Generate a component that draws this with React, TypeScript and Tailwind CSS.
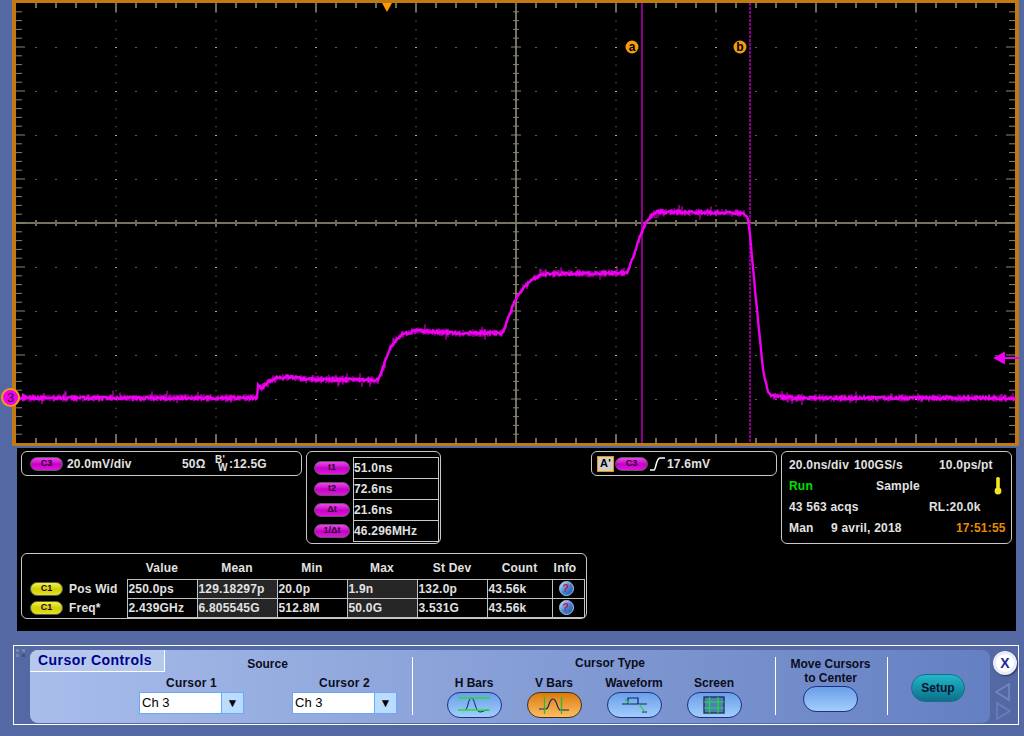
import type { ReactNode } from "react";

const range = (from: number, to: number, step: number) => {
  const out: number[] = [];
  for (let v = from; v <= to + 0.01; v += step) out.push(v);
  return out;
};

const TRACE: [number, number][] = [
  [17, 398], [257, 398], [258, 386], [262, 388], [268, 382], [275, 378], [290, 377],
  [310, 379.5], [378, 380], [381, 373], [390, 348], [395, 341], [403, 334], [418, 330.5],
  [453, 333], [502, 333], [505, 327], [508, 318], [515, 300], [523, 288], [533, 279],
  [543, 274], [627, 273], [630, 266], [640, 237], [645, 224], [650, 217], [657, 212],
  [743, 213], [748, 218], [750, 235], [756, 300], [763, 370], [768, 392], [772, 396],
  [790, 398], [1015, 398],
];

// small seeded generator so the noise is the same on every render
let seed = 20180409;
const rnd = () => {
  seed = (seed + 0x6d2b79f5) | 0;
  let t = Math.imul(seed ^ (seed >>> 15), 1 | seed);
  t = (t + Math.imul(t ^ (t >>> 7), 61 | t)) ^ t;
  return ((t ^ (t >>> 14)) >>> 0) / 4294967296;
};

const yAt = (x: number) => {
  for (let i = 1; i < TRACE.length; i++) {
    const [x0, y0] = TRACE[i - 1];
    const [x1, y1] = TRACE[i];
    if (x <= x1) return y0 + ((y1 - y0) * (x - x0)) / (x1 - x0);
  }
  return 398;
};

let tracePath = "";
let noisePath = "";
for (let x = 17; x <= 1015; x++) {
  const y = yAt(x);
  const flat = Math.abs(yAt(x + 1) - y) < 0.6;
  const j = Math.round((rnd() - 0.5) * (flat ? 3 : 1.6));
  tracePath += `${x === 17 ? "M" : "L"}${x} ${y + j} `;
  if (flat ? rnd() < 0.55 : x < 745 && rnd() < 0.5) {
    const up = 1.5 + rnd() * (rnd() < 0.12 ? 6 : 2.5);
    const down = 1.5 + rnd() * (rnd() < 0.12 ? 6 : 2.5);
    noisePath += `M${x} ${y - up} V${y + down} `;
  }
}

function Scope() {
  return (
    <svg viewBox="16 3 999 440" className="block w-[999px] h-[440px] overflow-visible">
      <g fill="#55524a">
        {range(116, 916, 100).map((x) =>
          range(11.8, 435, 8.8).map((y) => <rect key={`${x}-${y}`} x={x - 1} y={y} width={2} height={1} fill="#4a4840" />)
        )}
        {range(47, 399, 44).map((y) =>
          range(36, 996, 20).map((x) => (
            <rect key={`${x}-${y}`} x={x - 1} y={y} width={2} height={1} fill={(x - 16) % 100 === 0 ? "#b0ac98" : "#5c5a50"} />
          ))
        )}
      </g>
      <g stroke="#6f6b5c" strokeWidth={2}>
        <path d="M516 3V443M16 223H1015" stroke="#77725f" strokeWidth={2} />
        {range(36, 996, 20).map((x) => {
          const major = (x - 16) % 100 === 0;
          const len = major ? 9 : 5;
          return (
            <path key={x} d={`M${x} 3V${3 + len}M${x} 443V${443 - len}M${x} ${223 - (major ? 4 : 3)}V${223 + (major ? 4 : 3)}`} />
          );
        })}
        {range(11.8, 435, 8.8).map((y, i) => {
          const major = (i + 1) % 5 === 0;
          const len = major ? 9 : 6;
          const half = major ? 5 : 3;
          return (
            <path key={y} stroke="#8b8672" strokeWidth={1} d={`M16 ${y}H${16 + len}M1015 ${y}H${1015 - len}M${516 - half} ${y}H${516 + half}`} />
          );
        })}
      </g>
      <path d="M642 3V443" stroke="#8a008a" strokeWidth={2} />
      <path d="M750 3V443" stroke="#8a008a" strokeWidth={2} strokeDasharray="3 1" />
      <path d={tracePath} fill="none" stroke="#f000f0" strokeWidth={2.4} />
      <path d={noisePath} fill="none" stroke="#f000f0" strokeWidth={1} />
      <path d="M22 393L29 397L22 401Z" fill="#f000f0" />
      <path d="M382 3H392L387 12Z" fill="#ff9a00" />
      <path d="M1004 353V363L995 358ZM1003 358H1019" fill="#f000f0" stroke="#f000f0" strokeWidth={1.8} />
      <circle cx={632} cy={47} r={6.5} fill="#f59b0c" />
      <circle cx={740} cy={47} r={6.5} fill="#f59b0c" />
      <text x={632} y={51} textAnchor="middle" fontSize={12} fontWeight={700} fill="#000">a</text>
      <text x={740} y={51} textAnchor="middle" fontSize={12} fontWeight={700} fill="#000">b</text>
    </svg>
  );
}

function Pill({ label, yellow, wide }: { label: string; yellow?: boolean; wide?: boolean }) {
  return (
    <span
      className={`flex h-[14px] shrink-0 items-center justify-center rounded-full border border-[#5a5a5a] text-[9px] font-bold leading-none tracking-normal text-[#2a002a] bg-gradient-to-b ${
        wide ? "w-[36px]" : "w-[33px]"
      } ${yellow ? "from-[#f4f43a] via-[#cfcf00] to-[#e2e220]" : "from-[#f040f0] via-[#c400c4] to-[#e014e0]"}`}
    >
      {label}
    </span>
  );
}

function Box({ className, children }: { className: string; children: ReactNode }) {
  return <div className={`rounded-[6px] border border-[#c8c8c8] ${className}`}>{children}</div>;
}

const CURSOR_ROWS = [
  ["t1", "51.0ns"],
  ["t2", "72.6ns"],
  ["Δt", "21.6ns"],
  ["1/Δt", "46.296MHz"],
];

const MEAS_HEAD = ["Value", "Mean", "Min", "Max", "St Dev", "Count"];
const MEAS_ROWS = [
  { name: "Pos Wid", cells: ["250.0ps", "129.18297p", "20.0p", "1.9n", "132.0p", "43.56k"] },
  { name: "Freq*", cells: ["2.439GHz", "6.805545G", "512.8M", "50.0G", "3.531G", "43.56k"] },
];

function InfoIcon() {
  return (
    <span className="ml-[6px] flex h-[15px] w-[15px] items-center justify-center rounded-full border border-[#9cc4f0] bg-gradient-to-br from-[#cfe6ff] via-[#3f86d8] to-[#1c55a8] text-[11px] font-bold leading-none text-[#d0103a]">
      ?
    </span>
  );
}

function Readouts() {
  return (
    <div className="ml-[17px] h-[183px] w-[999px] bg-black pl-[4px] pt-[3px] text-[12px] font-bold tracking-[0.2px] text-[#e2e2e2]">
      <div className="flex items-start">
        <Box className="flex h-[25px] w-[281px] items-center pl-[8px]">
          <Pill label="C3" />
          <span className="ml-[4px] w-[115px]">20.0mV/div</span>
          <span className="w-[33px]">50Ω</span>
          <span className="flex items-center">
            <span className="flex w-[11px] flex-col text-[10px] leading-[8px]">
              <span>B'</span>
              <span className="pl-[3px]">W</span>
            </span>
            <span className="ml-[3px]">:12.5G</span>
          </span>
        </Box>
        <Box className="ml-[4px] flex h-[93px] w-[135px] pl-[7px] pt-[5px]">
          <div className="flex w-[39px] flex-col">
            {CURSOR_ROWS.map(([k]) => (
              <div key={k} className="flex h-[21px] items-center">
                <Pill label={k} wide />
              </div>
            ))}
          </div>
          <div className="h-[85px] w-[86px] border-t border-l border-[#c8c8c8]">
            {CURSOR_ROWS.map(([k, v]) => (
              <div key={k} className="flex h-[21px] items-center border-r border-b border-[#c8c8c8]">
                {v}
              </div>
            ))}
          </div>
        </Box>
        <Box className="ml-[150px] flex h-[25px] w-[186px] items-center pl-[5px]">
          <span className="flex h-[16px] w-[17px] items-center justify-center border border-[#f09000] bg-[#d0d0d0] text-[11px] leading-none text-black">
            A'
          </span>
          <span className="ml-[1px]">
            <Pill label="C3" />
          </span>
          <svg viewBox="0 0 16 14" className="ml-[2px] h-[14px] w-[16px]" fill="none" stroke="#fff" strokeWidth={1.5}>
            <path d="M0 13H4C6 13 6 1 10 1H15" />
          </svg>
          <span className="ml-[1px]">17.6mV</span>
        </Box>
        <Box className="ml-[4px] h-[93px] w-[231px] pl-[7px] pt-[2px]">
          <div className="flex h-[21px] items-center">
            <span className="w-[65px]">20.0ns/div</span>
            <span className="w-[85px]">100GS/s</span>
            <span>10.0ps/pt</span>
          </div>
          <div className="flex h-[21px] items-center">
            <span className="w-[87px] text-[#00e000]">Run</span>
            <span className="w-[118px]">Sample</span>
            <svg viewBox="0 0 8 18" className="h-[18px] w-[8px]" fill="#f5e61e">
              <rect x={2.2} y={0} width={3.6} height={14} rx={1.5} />
              <circle cx={4} cy={14} r={3.4} />
            </svg>
          </div>
          <div className="flex h-[21px] items-center">
            <span className="w-[140px]">43 563 acqs</span>
            <span>RL:20.0k</span>
          </div>
          <div className="flex h-[21px] items-center">
            <span className="w-[42px]">Man</span>
            <span className="w-[125px]">9 avril, 2018</span>
            <span className="text-[#e88a00]">17:51:55</span>
          </div>
        </Box>
      </div>
      <Box className="mt-[9px] h-[66px] w-[566px]">
        <table className="table-fixed border-collapse">
          <colgroup>
            <col className="w-[105px]" />
            <col className="w-[70px]" />
            <col className="w-[80px]" />
            <col className="w-[70px]" />
            <col className="w-[70px]" />
            <col className="w-[70px]" />
            <col className="w-[65px]" />
            <col className="w-[32px]" />
          </colgroup>
          <thead>
            <tr className="h-[25px]">
              <th />
              {MEAS_HEAD.map((h) => (
                <th key={h} className="pt-[3px] text-center font-bold">
                  {h}
                </th>
              ))}
              <th className="pr-[6px] pt-[3px] text-center font-bold">Info</th>
            </tr>
          </thead>
          <tbody>
            {MEAS_ROWS.map((row) => (
              <tr key={row.name} className="h-[19px]">
                <td className="p-0">
                  <div className="flex items-center pl-[8px]">
                    <Pill label="C1" yellow />
                    <span className="ml-[6px]">{row.name}</span>
                  </div>
                </td>
                {row.cells.map((c, i) => (
                  <td
                    key={i}
                    className={`border border-[#c0c0c0] p-0 pl-[1px] leading-none ${i === 1 || i === 3 ? "bg-[#262626]" : ""}`}
                  >
                    {c}
                  </td>
                ))}
                <td className="border border-[#c0c0c0] p-0">
                  <InfoIcon />
                </td>
              </tr>
            ))}
          </tbody>
        </table>
      </Box>
    </div>
  );
}

function Select() {
  return (
    <div className="flex h-[22px] w-[105px] border border-[#68a8ff] bg-white">
      <span className="flex-1 pl-[2px] text-[13px] font-normal leading-[20px] text-black">Ch 3</span>
      <span className="flex w-[22px] items-center justify-center border-l border-[#68a8ff] bg-[#bcdcff] text-[12px] leading-none text-black">
        ▼
      </span>
    </div>
  );
}

function RoundButton({ children, active }: { children?: ReactNode; active?: boolean }) {
  return (
    <div
      className={`flex h-[26px] w-[55px] items-center justify-center rounded-full border bg-gradient-to-b ${
        active
          ? "border-[#3a3028] from-[#d87c00] to-[#ffbe5c]"
          : "border-[#1f2f84] from-[#6a9ee8] to-[#a2cefc]"
      }`}
    >
      {children}
    </div>
  );
}

const Icon = ({ children }: { children: ReactNode }) => (
  <svg viewBox="0 0 34 20" className="h-[20px] w-[34px]" fill="none" strokeWidth={1}>
    {children}
  </svg>
);

const CURSOR_TYPES: { label: string; active?: boolean; icon: ReactNode }[] = [
  {
    label: "H Bars",
    icon: (
      <>
        <path d="M8 15C11 15 11 3 14.5 3C18 3 18 17 23 17C26 17 27 15 31 15" stroke="#12206e" />
        <path d="M1 3H33M1 15H33" stroke="#22e030" strokeWidth={1.5} />
      </>
    ),
  },
  {
    label: "V Bars",
    active: true,
    icon: (
      <>
        <path d="M2 14H9C12 14 12 4 16 4C20 4 20 14 23 15H32" stroke="#12206e" strokeWidth={1.2} />
        <path d="M7.5 2V19M24.5 2V19" stroke="#22c030" strokeWidth={1.3} />
      </>
    ),
  },
  {
    label: "Waveform",
    icon: (
      <>
        <path d="M5 9H30M11 9V3H21V9M25 17H30" stroke="#12206e" strokeWidth={1.2} />
        <path d="M8 4L13 9M22 9L28 17" stroke="#22d030" strokeWidth={1.2} />
      </>
    ),
  },
  {
    label: "Screen",
    icon: (
      <>
        <rect x={7} y={2} width={20} height={16} fill="#4f7fb8" stroke="#1d2c50" strokeWidth={1.3} />
        <path d="M12.5 2V18M21 2V18M7 7H27M7 13H27" stroke="#22e030" strokeWidth={1.2} />
      </>
    ),
  },
];

function CursorControls() {
  return (
    <div className="ml-[13px] mt-[14px] flex h-[80px] w-[1006px] border border-white text-[12px] font-bold text-[#0c0c1c]">
      <div className="w-[16px] pl-[2px] pt-[3px]">
        <div className="grid w-[10px] grid-cols-2 gap-[2px]">
          <span className="h-[3px] w-[3px] bg-[#7a86a8]" />
          <span className="h-[3px] w-[3px] bg-[#7a86a8]" />
          <span className="h-[3px] w-[3px] bg-[#7a86a8]" />
          <span className="h-[3px] w-[3px] bg-[#3f5084]" />
        </div>
      </div>
      <div className="mt-[4px] flex h-[73px] w-[960px] rounded-[8px] bg-gradient-to-r from-[#a8bdea] to-[#6580c2]">
        <div className="relative w-[382px] pl-[109px] pt-[7px]">
          <div className="absolute left-0 top-0 flex h-[22px] w-[135px] items-center rounded-tl-[8px] border-r border-b border-white bg-[#b6c8ec] pl-[8px] text-[14px] tracking-[0.45px] text-[#00008c]">
            Cursor Controls
          </div>
          <div className="w-[257px] text-center leading-[14px]">Source</div>
          <div className="mt-[5px] flex gap-[48px]">
            {["Cursor 1", "Cursor 2"].map((c) => (
              <div key={c} className="w-[105px]">
                <div className="mb-[2px] text-center leading-[14px] tracking-[0.2px]">{c}</div>
                <Select />
              </div>
            ))}
          </div>
        </div>
        <div className="mt-[7px] h-[58px] w-px bg-white" />
        <div className="w-[362px] pl-[21px] pt-[6px]">
          <div className="h-[13px] w-[320px] overflow-hidden pl-[32px] text-center leading-[14px]">Cursor Type</div>
          <div className="mt-[7px] grid w-[320px] grid-cols-4">
            {CURSOR_TYPES.map((t) => (
              <div key={t.label} className="flex flex-col items-center">
                <div className="mb-[2px] leading-[14px]">{t.label}</div>
                <RoundButton active={t.active}>
                  <Icon>{t.icon}</Icon>
                </RoundButton>
              </div>
            ))}
          </div>
        </div>
        <div className="mt-[7px] h-[58px] w-px bg-white" />
        <div className="flex w-[111px] flex-col items-center pr-[2px] pt-[7px]">
          <div className="text-center leading-[14px]">
            Move Cursors
            <br />
            to Center
          </div>
          <div className="mt-[1px]">
            <RoundButton />
          </div>
        </div>
        <div className="mt-[7px] h-[58px] w-px bg-white" />
        <div className="pl-[23px] pt-[24px]">
          <div className="flex h-[28px] w-[54px] items-center justify-center rounded-full border border-[#1a6d8c] bg-gradient-to-b from-[#22b8c8] to-[#0c6f8a] text-[#06162e]">
            Setup
          </div>
        </div>
      </div>
      <div className="flex w-[28px] flex-col pl-[3px] pt-[5px]">
        <div className="flex h-[24px] w-[24px] items-center justify-center rounded-full border-[3px] border-[#e8ecf8] bg-white text-[14px] text-[#1c2a94] shadow-[1px_1px_2px_#2a3560]">
          X
        </div>
        <svg viewBox="0 0 16 37" className="ml-[2px] mt-[8px] h-[37px] w-[16px]" fill="none" stroke="#7287c2" strokeWidth={1.6}>
          <path d="M14 1V17L1 9Z" />
          <path d="M2 20V36L15 28Z" stroke="#6a80bc" />
        </svg>
      </div>
    </div>
  );
}

export default function App() {
  return (
    <div className="relative h-[736px] w-[1024px] overflow-hidden bg-[#5469a4] font-['Liberation_Sans',Arial,sans-serif]">
      <div className="ml-[12px] h-[446px] w-[1007px] border-x-4 border-t-[3px] border-b-[3px] border-[#c07a14] bg-black">
        <Scope />
      </div>
      <div className="absolute left-[1px] top-[388px] flex h-[19px] w-[19px] items-center justify-center rounded-full border-2 border-[#f59b0c] bg-[#f000f0] text-[13px] text-[#300030]">
        3
      </div>
      <div className="mt-[2px]">
        <Readouts />
      </div>
      <CursorControls />
    </div>
  );
}
